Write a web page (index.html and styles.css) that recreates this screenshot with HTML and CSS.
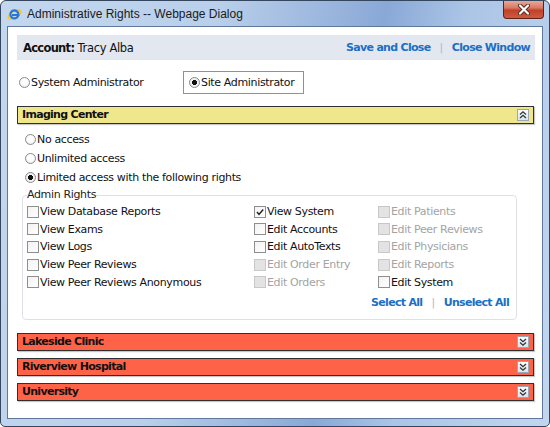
FILE: index.html
```html
<!DOCTYPE html>
<html>
<head>
<meta charset="utf-8">
<title>Administrative Rights</title>
<link rel="stylesheet" href="styles.css">
</head>
<body>
<div class="window">
  <div class="titlebar">
    <svg class="ie" width="15" height="15" viewBox="0 0 15 15">
      <ellipse cx="7.5" cy="7.5" rx="7" ry="3.2" transform="rotate(-30 7.5 7.5)" fill="none" stroke="#f2c230" stroke-width="1.4"/>
      <path d="M11.2 8.6 A4 4 0 1 1 11.2 6.2 L11.4 8 L5 8" fill="none" stroke="#2a78d6" stroke-width="2.2"/>
    </svg>
    <span class="title">Administrative Rights -- Webpage Dialog</span>
    <div class="close">
      <svg width="14" height="11" viewBox="0 0 14 11">
        <path d="M3 1.5 L11 9.5 M11 1.5 L3 9.5" stroke="#5a2a20" stroke-width="4" stroke-linecap="round"/>
        <path d="M3 1.5 L11 9.5 M11 1.5 L3 9.5" stroke="#ffffff" stroke-width="2.2" stroke-linecap="round"/>
      </svg>
    </div>
  </div>
  <div class="client">
    <div class="acct">
      <div class="acct-name"><b>Account:</b> Tracy Alba</div>
      <div class="links"><a class="lnk">Save and Close</a><span class="sep">|</span><a class="lnk">Close Window</a></div>
    </div>

    <div class="roles">
      <label class="opt role-first"><span class="radio"></span>System Administrator</label>
      <div class="boxed"><label class="opt"><span class="radio on"></span>Site Administrator</label></div>
    </div>

    <div class="section first">
      <div class="bar yellow"><span class="bar-title">Imaging Center</span>
        <span class="toggle"><svg width="12" height="12" viewBox="0 0 12 12"><path d="M3 5.5 L6 2.8 L9 5.5 M3 9 L6 6.3 L9 9" fill="none" stroke="#333" stroke-width="1.3"/></svg></span>
      </div>
      <div class="body">
        <div class="access">
          <label class="opt arow"><span class="radio"></span>No access</label>
          <label class="opt arow"><span class="radio"></span>Unlimited access</label>
          <label class="opt arow"><span class="radio on"></span>Limited access with the following rights</label>
        </div>
        <fieldset class="rights">
          <legend>Admin Rights</legend>
          <div class="grid">
            <label class="cb"><span class="box"></span>View Database Reports</label>
            <label class="cb"><span class="box"></span>View Exams</label>
            <label class="cb"><span class="box"></span>View Logs</label>
            <label class="cb"><span class="box"></span>View Peer Reviews</label>
            <label class="cb"><span class="box"></span>View Peer Reviews Anonymous</label>

            <label class="cb"><span class="box"><svg width="10" height="10" viewBox="0 0 10 10"><path d="M2 5 L4 7.4 L8.2 2.4" fill="none" stroke="#222" stroke-width="1.5"/></svg></span>View System</label>
            <label class="cb"><span class="box"></span>Edit Accounts</label>
            <label class="cb"><span class="box"></span>Edit AutoTexts</label>
            <label class="cb dis"><span class="box"></span>Edit Order Entry</label>
            <label class="cb dis"><span class="box"></span>Edit Orders</label>

            <label class="cb dis"><span class="box"></span>Edit Patients</label>
            <label class="cb dis"><span class="box"></span>Edit Peer Reviews</label>
            <label class="cb dis"><span class="box"></span>Edit Physicians</label>
            <label class="cb dis"><span class="box"></span>Edit Reports</label>
            <label class="cb"><span class="box"></span>Edit System</label>
          </div>
          <div class="selects"><a class="lnk">Select All</a><span class="sep">|</span><a class="lnk">Unselect All</a></div>
        </fieldset>
      </div>
    </div>

    <div class="section">
      <div class="bar red"><span class="bar-title">Lakeside Clinic</span>
        <span class="toggle"><svg width="12" height="12" viewBox="0 0 12 12"><path d="M3 3 L6 5.7 L9 3 M3 6.5 L6 9.2 L9 6.5" fill="none" stroke="#333" stroke-width="1.3"/></svg></span>
      </div>
    </div>
    <div class="section">
      <div class="bar red"><span class="bar-title">Riverview Hospital</span>
        <span class="toggle"><svg width="12" height="12" viewBox="0 0 12 12"><path d="M3 3 L6 5.7 L9 3 M3 6.5 L6 9.2 L9 6.5" fill="none" stroke="#333" stroke-width="1.3"/></svg></span>
      </div>
    </div>
    <div class="section">
      <div class="bar red"><span class="bar-title">University</span>
        <span class="toggle"><svg width="12" height="12" viewBox="0 0 12 12"><path d="M3 3 L6 5.7 L9 3 M3 6.5 L6 9.2 L9 6.5" fill="none" stroke="#333" stroke-width="1.3"/></svg></span>
      </div>
    </div>
  </div>
</div>
</body>
</html>
```

FILE: styles.css
```css
* { box-sizing: border-box; }
html, body { margin: 0; padding: 0; background: #ffffff; }
body {
  font-family: "DejaVu Sans", Verdana, sans-serif;
  font-size: 11px;
  letter-spacing: -0.35px;
  color: #111;
}
b, .bar-title, .lnk { font-weight: bold; letter-spacing: -0.7px; }

.window {
  width: 550px;
  height: 427px;
  border: 1px solid #34475f;
  border-radius: 6px 6px 5px 5px;
  padding: 0 6px 7px 6px;
  display: flex;
  flex-direction: column;
  background: linear-gradient(100deg, #c3d7ee 0%, #b9cfea 35%, #97b3dc 55%, #89a8d6 62%, #abc5e7 75%, #c2d6ee 100%);
  overflow: hidden;
}

.titlebar {
  height: 25px;
  flex: none;
  display: flex;
  align-items: flex-start;
  margin: 0 -6px;
  padding-left: 6px;
}
.ie { margin-top: 6px; flex: none; }
.title {
  margin-left: 5px;
  line-height: 26px;
  font-family: "Liberation Sans", Arial, sans-serif;
  font-size: 12px;
  letter-spacing: 0;
  color: #1b1b1b;
}
.close {
  margin-left: auto;
  margin-right: 5px;
  width: 41px;
  height: 18px;
  border: 1px solid #5c2418;
  border-top: none;
  border-radius: 0 0 4px 4px;
  background: linear-gradient(#e9a797 0%, #d87a63 40%, #c0412a 55%, #cf5a40 100%);
  display: flex;
  align-items: center;
  justify-content: center;
}

.client {
  flex: 1;
  background: #ffffff;
  border: 1px solid #5f789c;
  padding: 8px 8px 0 9px;
}

.acct {
  height: 25px;
  background: #e3e8f0;
  display: flex;
  align-items: center;
  justify-content: space-between;
  padding: 0 5px 0 6px;
  margin-right: -1px;
  color: #111;
}
.acct-name { font-size: 11.5px; }
.lnk { color: #1c6fc6; cursor: pointer; }
.sep { color: #b4b8bd; margin: 0 9px; }

.opt { display: flex; align-items: center; }
.radio {
  flex: none;
  width: 11px;
  height: 11px;
  border: 1px solid #8a8a8a;
  border-radius: 50%;
  background: radial-gradient(circle at 50% 40%, #ffffff 40%, #e2e2e2 100%);
  margin-right: 1px;
}
.radio.on { background: radial-gradient(circle, #111 0, #111 2.3px, #f4f4f4 2.8px, #e4e4e4 100%); }

.roles {
  margin-top: 11px;
  height: 23px;
  display: flex;
  align-items: center;
}
.role-first { width: 164px; margin-left: 2px; flex: none; }
.boxed {
  height: 23px;
  border: 1px solid #ee6b6b;
  padding: 0 9px 0 5px;
  display: flex;
  align-items: center;
}

.section { margin-top: 7px; }
.section.first { margin-top: 12px; }

.bar {
  height: 18px;
  border: 1px solid #2f2f2f;
  box-shadow: 1px 1px 1px rgba(0,0,0,0.22);
  display: flex;
  align-items: center;
  justify-content: space-between;
  padding: 0 4px 0 4px;
  color: #111;
  line-height: 16px;
}
.yellow { background: #f0e68c; }
.red { background: #ff6347; }
.toggle {
  width: 12px;
  height: 12px;
  border: 1px solid #9aa7b6;
  background: linear-gradient(#fbfdff, #d9e4ef);
  display: flex;
  align-items: center;
  justify-content: center;
}
.toggle svg { flex: none; }

.body { padding: 6px 17px 6px 5px; }
.arow { height: 19px; margin-left: 3px; }

.rights {
  margin: 1px 0 0 0;
  padding: 1px 7px 8px 4px;
  border: 1px solid #dde1e6;
  border-radius: 4px;
  min-width: 0;
}
.rights legend {
  padding: 0;
  line-height: 14px;
  color: #222;
}
.grid {
  display: grid;
  grid-template-columns: 227px 124px 1fr;
  grid-template-rows: repeat(5, 17.6px);
  grid-auto-flow: column;
}
.cb { display: flex; align-items: center; white-space: nowrap; }
.box {
  flex: none;
  width: 12px;
  height: 12px;
  border: 1px solid #8e8e8e;
  background: linear-gradient(135deg, #f2f2f2, #ffffff);
  margin-right: 1px;
  display: flex;
  align-items: center;
  justify-content: center;
}
.dis { color: #a3a3a3; }
.dis .box { background: #e3e3e3; border-color: #c8c8c8; }

.selects {
  margin-top: 3px;
  line-height: 17px;
  text-align: right;
}
```
